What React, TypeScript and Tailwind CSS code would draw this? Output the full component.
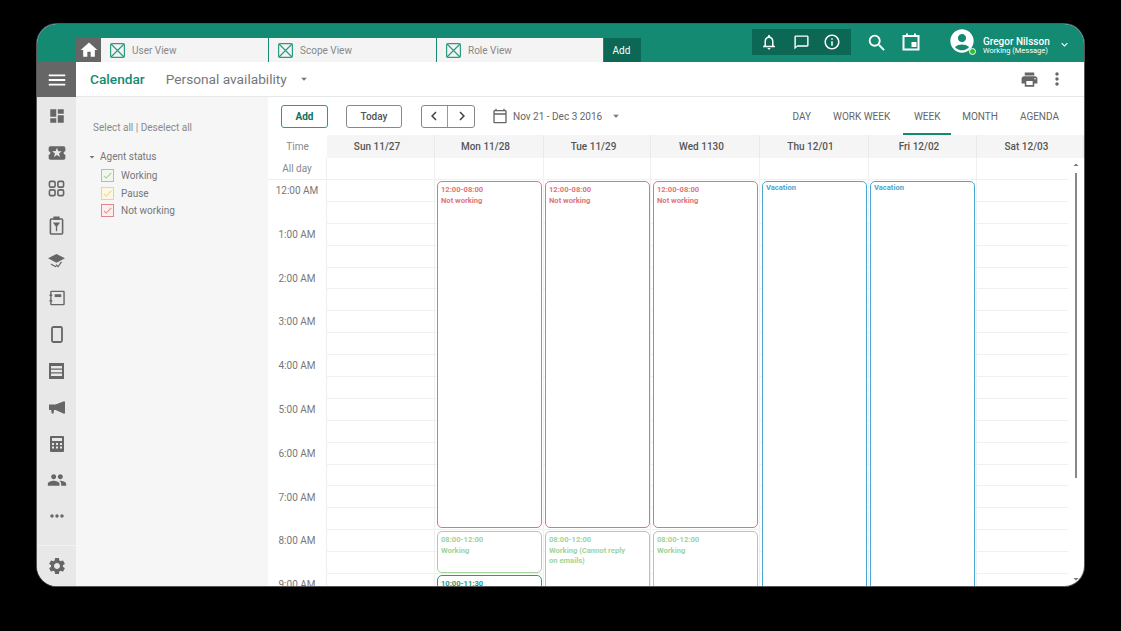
import {
  MdAccountCircle,
  MdChevronLeft,
  MdChevronRight,
  MdDashboard,
  MdHome,
  MdInfoOutline,
  MdKeyboardArrowDown,
  MdLocalActivity,
  MdMoreHoriz,
  MdMoreVert,
  MdOutlineCalendarToday,
  MdOutlineChatBubbleOutline,
  MdOutlineNotifications,
  MdPeople,
  MdPrint,
  MdSearch,
  MdSettings,
  MdCheck,
  MdMenu,
  MdArrowDropDown,
  MdArrowDropUp,
} from 'react-icons/md';

const hours = ['12:00 AM', '1:00 AM', '2:00 AM', '3:00 AM', '4:00 AM', '5:00 AM', '6:00 AM', '7:00 AM', '8:00 AM', '9:00 AM'];
const days = [
  { label: 'Sun 11/27', width: 108 },
  { label: 'Mon 11/28', width: 109 },
  { label: 'Tue 11/29', width: 107 },
  { label: 'Wed 1130', width: 109 },
  { label: 'Thu 12/01', width: 109 },
  { label: 'Fri 12/02', width: 108 },
  { label: 'Sat 12/03', width: 107 },
];
const tabs = [
  { label: 'User View', width: 168 },
  { label: 'Scope View', width: 168 },
  { label: 'Role View', width: 167 },
];

function TabIcon() {
  return (
    <svg width="15" height="15" viewBox="0 0 15 15" fill="none" stroke="#2a9a80" strokeWidth="1.2">
      <rect x="0.6" y="0.6" width="13.8" height="13.8" rx="1.5" />
      <path d="M1 1l13 13M14 1L1 14" />
    </svg>
  );
}

function GridIcon() {
  return (
    <svg width="17" height="17" viewBox="0 0 18 18" fill="none" stroke="#666" strokeWidth="1.7">
      <rect x="1.5" y="1.5" width="6" height="6" rx="1.5" />
      <rect x="10.5" y="1.5" width="6" height="6" rx="1.5" />
      <rect x="1.5" y="10.5" width="6" height="6" rx="1.5" />
      <rect x="10.5" y="10.5" width="6" height="6" rx="1.5" />
    </svg>
  );
}

function ClipboardIcon() {
  return (
    <svg width="15" height="19" viewBox="0 0 16 20" fill="none" stroke="#666" strokeWidth="1.7">
      <rect x="1.5" y="3" width="13" height="16" rx="1" />
      <path d="M5.5 3V1.2h5V3z" fill="#666" />
      <path d="M8 8v8M5.5 7.5h5L8 11z" fill="#666" strokeWidth="1.4" />
    </svg>
  );
}

function SchoolIcon() {
  return (
    <svg width="17" height="15" viewBox="0 0 18 16" fill="#666">
      <path d="M9 0L0 4.6l9 4.6 9-4.6z" />
      <path d="M3 8.2v3.2L8 14l1.2-.6L3 10zM15 8.6l-4.2 5.8L8 12l1-1 1.6 1.4 3-4z" />
    </svg>
  );
}

function NotebookIcon() {
  return (
    <svg width="16" height="16" viewBox="0 0 17 16" fill="none" stroke="#666" strokeWidth="1.5">
      <rect x="2" y="1" width="14" height="14" rx="0.5" />
      <path d="M0.5 5h3M0.5 11h3" />
      <rect x="6" y="4" width="7" height="3" fill="#666" stroke="none" />
    </svg>
  );
}

function DeviceIcon() {
  return (
    <svg width="12" height="17" viewBox="0 0 12 17" fill="none" stroke="#666" strokeWidth="1.8">
      <rect x="1" y="1" width="10" height="15" rx="1.5" />
    </svg>
  );
}

function ListCardIcon() {
  return (
    <svg width="15" height="16" viewBox="0 0 15 16" fill="#666">
      <path fillRule="evenodd" d="M0 0h15v16H0zM2 3v2.4h11V3zM2 6.8v2.4h11V6.8zM2 10.6V13h11v-2.4z" />
    </svg>
  );
}

function MegaphoneIcon() {
  return (
    <svg width="16" height="13" viewBox="0 0 16 13" fill="#666">
      <path d="M0 3.5h6.5L15 0.2c.6 0 1 .3 1 .8v11c0 .5-.4.8-1 .8L6.5 9H5l-.4 3.5H2.6L2.2 9H0z" />
    </svg>
  );
}

function CalculatorIcon() {
  return (
    <svg width="14" height="16" viewBox="0 0 14 16" fill="#666">
      <path fillRule="evenodd" d="M1 0h12a1 1 0 011 1v14a1 1 0 01-1 1H1a1 1 0 01-1-1V1a1 1 0 011-1zM2 2v3h10V2zM2 7v2h2V7zM6 7v2h2V7zM10 7v2h2V7zM2 10.5v2h2v-2zM6 10.5v2h2v-2zM10 10.5v2h2v-2z" />
    </svg>
  );
}

function PipIcon() {
  return (
    <svg width="18" height="18" viewBox="0 0 18 18" fill="none" stroke="#fff" strokeWidth="2">
      <path d="M1.5 3h15v13.5h-15z" />
      <path d="M5 0.5v3M13 0.5v3" />
      <rect x="9.5" y="9" width="5" height="5" fill="#fff" stroke="none" />
    </svg>
  );
}

function Check({ color, bg }: { color: string; bg: string }) {
  return (
    <span className="flex h-[13px] w-[13px] items-center justify-center border" style={{ borderColor: color, backgroundColor: bg }}>
      <MdCheck size={11} color={color} />
    </span>
  );
}

function CalEvent({ top, height, left, color, time, label }: { top: number; height: number; left: number; color: string; time?: string; label: string }) {
  return (
    <div
      className="absolute w-[105px] overflow-hidden rounded-[5px] border bg-white px-[3px] pt-[1px] text-[7.6px] leading-[10px] font-bold whitespace-pre-line"
      style={{ top, height, left, borderColor: color, color }}
    >
      {time && <div className="pt-[2px]">{time}</div>}
      <div className={time ? 'pt-[1px]' : ''}>{label}</div>
    </div>
  );
}

const red = '#e0747c';
const green = '#a0d498';
const blue = '#4aa8d0';

const railIcons = [
  <MdDashboard size={18} />,
  <MdLocalActivity size={20} />,
  <GridIcon />,
  <ClipboardIcon />,
  <SchoolIcon />,
  <NotebookIcon />,
  <DeviceIcon />,
  <ListCardIcon />,
  <MegaphoneIcon />,
  <CalculatorIcon />,
  <MdPeople size={20} />,
  <MdMoreHoriz size={20} />,
];

export default function App() {
  return (
    <div className="flex h-[631px] w-[1121px] items-start bg-black pt-[24px] pl-[37px] font-['Roboto',sans-serif]">
      <div className="flex h-[562px] w-[1047px] flex-col overflow-hidden rounded-[20px] bg-white ring-1 ring-[#555]">
        {/* top bar */}
        <header className="flex h-[38px] shrink-0 bg-[#138a71]">
          <div className="flex w-[39px] shrink-0" />
          <div className="flex h-[24px] self-end">
            <div className="flex w-[25px] items-center justify-center bg-[#666]">
              <MdHome size={20} color="#fff" />
            </div>
            {tabs.map((tab) => (
              <div
                key={tab.label}
                className="flex items-center gap-[7px] border-r border-[#138a71] bg-[#f4f4f4] pl-[9px] text-[10px] text-[#888]"
                style={{ width: tab.width }}
              >
                <TabIcon />
                {tab.label}
              </div>
            ))}
            <div className="flex w-[37px] items-center justify-center pr-[2px] bg-[#0c6855] text-[10px] text-white">Add</div>
          </div>
          <div className="mt-[5px] ml-[111px] flex h-[26px] w-[99px] items-center self-start bg-[#0c6855] pl-[8px] text-white">
            <MdOutlineNotifications size={18} />
            <MdOutlineChatBubbleOutline size={17} className="ml-[15px]" />
            <MdInfoOutline size={18} className="ml-[13px]" />
          </div>
          <div className="ml-[15px] flex h-[38px] items-start pt-[8px] text-white">
            <MdSearch size={22} />
            <span className="mt-[1px] ml-[14px]">
              <PipIcon />
            </span>
          </div>
          <div className="relative mt-[4px] ml-[29px] h-[26px] w-[26px] text-white">
            <MdAccountCircle size={28} className="-mt-[1px] -ml-[1px]" />
            <span className="absolute right-[-1px] bottom-[-1px] h-[7px] w-[7px] rounded-full border border-white bg-[#22c524]" />
          </div>
          <div className="mt-[13px] ml-[8px] flex w-[69px] flex-col items-start whitespace-nowrap text-white">
            <span className="text-[10px] leading-[10px] font-medium">Gregor Nilsson</span>
            <span className="text-[7.5px] leading-[8px]">Working (Message)</span>
          </div>
          <MdKeyboardArrowDown size={13} color="#fff" className="mt-[14px] ml-[6px]" />
        </header>

        <div className="flex min-h-0 flex-1">
          {/* icon rail */}
          <aside className="flex w-[39px] shrink-0 flex-col bg-[#e8e8e8]">
            <div className="flex h-[35px] shrink-0 items-center justify-center bg-[#666]">
              <MdMenu size={22} color="#fff" />
            </div>
            <div className="flex flex-1 flex-col items-center pt-[1px] text-[#666]">
              {railIcons.map((icon, i) => (
                <div key={i} className="flex h-[36.4px] items-center justify-center">{icon}</div>
              ))}
            </div>
            <div className="flex h-[41px] shrink-0 items-start justify-center border-t border-[#f2f2f2] pt-[10px] text-[#666]">
              <MdSettings size={20} />
            </div>
          </aside>

          <div className="flex min-w-0 flex-1 flex-col">
            {/* title row */}
            <div className="flex h-[35px] shrink-0 items-center border-b border-[#e8e8e8] pl-[14px]">
              <span className="text-[13.7px] font-medium text-[#138a71]">Calendar</span>
              <span className="ml-[21px] text-[13.7px] text-[#777]">Personal availability</span>
              <MdArrowDropDown size={14} color="#777" className="ml-[10px]" />
              <MdPrint size={19} color="#666" className="ml-auto" />
              <MdMoreVert size={20} color="#666" className="mr-[17px] ml-[8px]" />
            </div>

            <div className="flex min-h-0 flex-1">
              {/* filter panel */}
              <div className="w-[192px] shrink-0 bg-[#f6f6f6] pt-[24px] text-[10px] text-[#777]">
                <div className="pl-[17px] leading-[13px] text-[#8a8a8a]">Select all | Deselect all</div>
                <div className="mt-[16px] flex items-center pl-[10px] leading-[14px]">
                  <MdArrowDropDown size={12} color="#777" />
                  <span className="ml-[2px]">Agent status</span>
                </div>
                <div className="mt-[5px] flex flex-col gap-[4.5px] pl-[25px]">
                  <div className="flex h-[13px] items-center gap-[7px]"><Check color="#9ccf94" bg="#f0f8ee" />Working</div>
                  <div className="flex h-[13px] items-center gap-[7px]"><Check color="#eed48a" bg="#fcf6e2" />Pause</div>
                  <div className="flex h-[13px] items-center gap-[7px]"><Check color="#e0868c" bg="#fbeeee" />Not working</div>
                </div>
              </div>

              {/* calendar */}
              <div className="flex min-w-0 flex-1 flex-col">
                <div className="flex h-[38px] shrink-0 items-center pl-[13px] text-[#666]">
                  <button className="h-[23px] w-[47px] rounded-[3px] border border-[#2a9a80] text-[10px] font-bold text-[#0f6f5b]">Add</button>
                  <button className="ml-[18px] h-[23px] w-[56px] rounded-[3px] border border-[#888] text-[10px] font-medium text-[#555]">Today</button>
                  <div className="ml-[19px] flex h-[23px] w-[54px] rounded-[3px] border border-[#888] text-[#444]">
                    <span className="flex flex-1 items-center justify-center border-r border-[#999]"><MdChevronLeft size={18} /></span>
                    <span className="flex flex-1 items-center justify-center pl-[2px]"><MdChevronRight size={18} /></span>
                  </div>
                  <MdOutlineCalendarToday size={16} className="ml-[17px]" />
                  <span className="ml-[5px] text-[10px] text-[#666]">Nov 21 - Dec 3 2016</span>
                  <MdArrowDropDown size={14} color="#777" className="ml-[7px]" />
                  <nav className="ml-auto flex h-full items-center pr-[25px] text-[10px] text-[#666]">
                    <span className="mr-[22px]">DAY</span>
                    <span className="mr-[13px]">WORK WEEK</span>
                    <span className="flex h-full w-[48px] items-center justify-center border-y-2 border-t-transparent border-b-[#138a71]">WEEK</span>
                    <span className="ml-[11px]">MONTH</span>
                    <span className="ml-[22px]">AGENDA</span>
                  </nav>
                </div>

                <div className="flex h-[23px] shrink-0 items-center text-[10px]">
                  <div className="flex h-full w-[59px] items-center justify-center text-[#888]">Time</div>
                  {days.map((d) => (
                    <div
                      key={d.label}
                      className="flex h-full items-center justify-center border-r border-[#e9e9e9] bg-[#f5f5f5] pr-[7px] font-medium text-[#555]"
                      style={{ width: d.width }}
                    >
                      {d.label}
                    </div>
                  ))}
                </div>

                <div className="relative flex min-h-0 flex-1 overflow-hidden">
                  <div className="w-[59px] shrink-0 border-r border-[#eeeeee] text-center text-[10px] text-[#777]">
                    <div className="h-[22px] border-b border-[#eeeeee] leading-[21px] text-[#888]">All day</div>
                    {hours.map((h) => (
                      <div key={h} className="h-[43.8px] pt-[4px] leading-[13px]">{h}</div>
                    ))}
                  </div>
                  <div className="relative flex-1">
                    <div className="mr-[16px] h-[22px] border-b border-[#f0f0f0]" />
                    {Array.from({ length: 20 }).map((_, i) => (
                      <div key={i} className="mr-[16px] h-[21.9px] border-b border-[#f0f0f0]" />
                    ))}
                    {/* day separators */}
                    <div className="absolute inset-0 flex">
                      {days.slice(0, 6).map((d) => (
                        <div key={d.label} className="h-full border-r border-[#f0f0f0]" style={{ width: d.width }} />
                      ))}
                    </div>

                    <CalEvent top={23} height={347} left={110} color={red} time="12:00-08:00" label="Not working" />
                    <CalEvent top={23} height={347} left={218} color={red} time="12:00-08:00" label="Not working" />
                    <CalEvent top={23} height={347} left={326} color={red} time="12:00-08:00" label="Not working" />
                    <CalEvent top={23} height={420} left={435} color={blue} label="Vacation" />
                    <CalEvent top={23} height={420} left={543} color={blue} label="Vacation" />
                    <CalEvent top={373} height={42} left={110} color={green} time="08:00-12:00" label="Working" />
                    <CalEvent top={373} height={70} left={218} color={green} time="08:00-12:00" label={'Working (Cannot reply\non emails)'} />
                    <CalEvent top={373} height={70} left={326} color={green} time="08:00-12:00" label="Working" />
                    <CalEvent top={417} height={40} left={110} color="#2a9a80" time="10:00-11:30" label="" />

                    {/* scrollbar */}
                    <div className="absolute top-0 right-0 bottom-0 flex w-[16px] flex-col items-center text-[#777]">
                      <MdArrowDropUp size={12} className="mt-[1px]" />
                      <div className="mt-[2px] h-[305px] w-[2px] bg-[#888]" />
                      <MdArrowDropDown size={12} className="mt-auto mb-[1px]" />
                    </div>
                  </div>
                </div>
              </div>
            </div>
          </div>
        </div>
      </div>
    </div>
  );
}
